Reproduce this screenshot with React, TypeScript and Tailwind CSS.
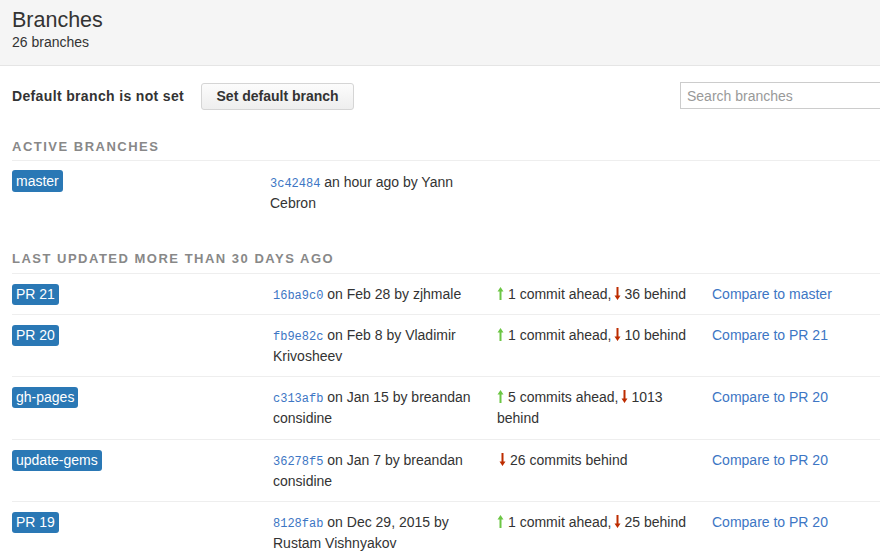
import React from "react";

const Up = () => (
  <svg width="7" height="15" viewBox="0 0 7 15" className="inline-block align-[-2px] mr-[4px]">
    <path d="M3.5 1 L6.5 5.5 L4.5 5.5 L4.5 14 L2.5 14 L2.5 5.5 L0.5 5.5 Z" fill="#6cc644" />
  </svg>
);
const Down = () => (
  <svg width="7" height="15" viewBox="0 0 7 15" className="inline-block align-[-2px] mr-[4px] ml-[2px]">
    <path d="M3.5 14 L6.5 9.5 L4.5 9.5 L4.5 1 L2.5 1 L2.5 9.5 L0.5 9.5 Z" fill="#bd2c00" />
  </svg>
);

type Row = {
  name: string;
  hash: string;
  when: string;
  ahead?: string;
  behind: string;
  compare: string;
};

const rows: Row[] = [
  { name: "PR 21", hash: "16ba9c0", when: "on Feb 28 by zjhmale", ahead: "1 commit ahead,", behind: "36 behind", compare: "Compare to master" },
  { name: "PR 20", hash: "fb9e82c", when: "on Feb 8 by Vladimir Krivosheev", ahead: "1 commit ahead,", behind: "10 behind", compare: "Compare to PR 21" },
  { name: "gh-pages", hash: "c313afb", when: "on Jan 15 by breandan considine", ahead: "5 commits ahead,", behind: "1013 behind", compare: "Compare to PR 20" },
  { name: "update-gems", hash: "36278f5", when: "on Jan 7 by breandan considine", behind: "26 commits behind", compare: "Compare to PR 20" },
  { name: "PR 19", hash: "8128fab", when: "on Dec 29, 2015 by Rustam Vishnyakov", ahead: "1 commit ahead,", behind: "25 behind", compare: "Compare to PR 20" },
];

const Badge = ({ name, tall }: { name: string; tall?: boolean }) => (
  <div className="flex items-start">
    <span className={"block bg-[#2a78b5] text-white rounded-[3px] px-[4px] text-[14px] " + (tall ? "leading-[22px]" : "leading-[21px]")}>{name}</span>
  </div>
);

const Hash = ({ h }: { h: string }) => (
  <span className="text-[#3d76c4] text-[12px] leading-none" style={{ fontFamily: '"Liberation Mono", "DejaVu Sans Mono", monospace' }}>{h}</span>
);

export default function App() {
  return (
    <div className="w-[880px] h-[560px] overflow-hidden bg-white text-[#333] text-[14px] leading-[21px]" style={{ fontFamily: '"Liberation Sans", Arial, sans-serif' }}>
      <div className="bg-[#f5f5f5] border-b border-[#e5e5e5] h-[66px] pl-3 pt-[6px]">
        <div className="text-[21.5px] leading-[28px]">Branches</div>
        <div className="text-[14px] leading-[20px] mt-[-2px]">26 branches</div>
      </div>
      <div className="w-[920px] pl-3">
        <div className="flex items-center mt-[17px] h-[27px]">
          <span className="font-bold tracking-[0.35px]">Default branch is not set</span>
          <button className="ml-[17px] h-[27px] w-[153px] border border-[#d5d5d5] rounded-[3px] bg-gradient-to-b from-[#fcfcfc] to-[#eeeeee] font-bold text-[14px] text-[#333]">
            Set default branch
          </button>
          <input
            placeholder="Search branches"
            className="ml-auto mt-[-2px] w-[240px] h-[27px] border border-[#cccccc] px-[6px] text-[14px] placeholder:text-[#999] outline-none"
          />
        </div>

        <div className="mt-[27px] pb-[3px] border-b border-[#eeeeee] text-[13px] leading-[20px] font-bold tracking-[1.5px] text-[#888]">
          ACTIVE BRANCHES
        </div>
        <div className="grid grid-cols-[258px_210px_1fr] pt-[9px] pb-[9px]">
          <Badge name="master" tall />
          <div className="pt-[2px]"><Hash h="3c42484" /> an hour ago by Yann Cebron</div>
          <div />
        </div>

        <div className="mt-[26px] pb-[4px] border-b border-[#eeeeee] text-[13px] leading-[20px] font-bold tracking-[1.5px] text-[#888]">
          LAST UPDATED MORE THAN 30 DAYS AGO
        </div>
        {rows.map((r, i) => (
          <div key={i} className={"grid grid-cols-[261px_224px_215px_1fr] pt-[10px] " + (i === 2 ? "pb-[10px] " : "pb-[9px] ") + (i > 0 ? "border-t border-[#eeeeee]" : "")}>
            <Badge name={r.name} />
            <div className="pr-[10px]"><Hash h={r.hash} /> {r.when}</div>
            <div className="pr-[6px]">
              {r.ahead ? (<><Up />{r.ahead}</>) : null}
              <Down />
              {r.behind}
            </div>
            <div><a className="text-[#3d76c4]">{r.compare}</a></div>
          </div>
        ))}
      </div>
    </div>
  );
}
